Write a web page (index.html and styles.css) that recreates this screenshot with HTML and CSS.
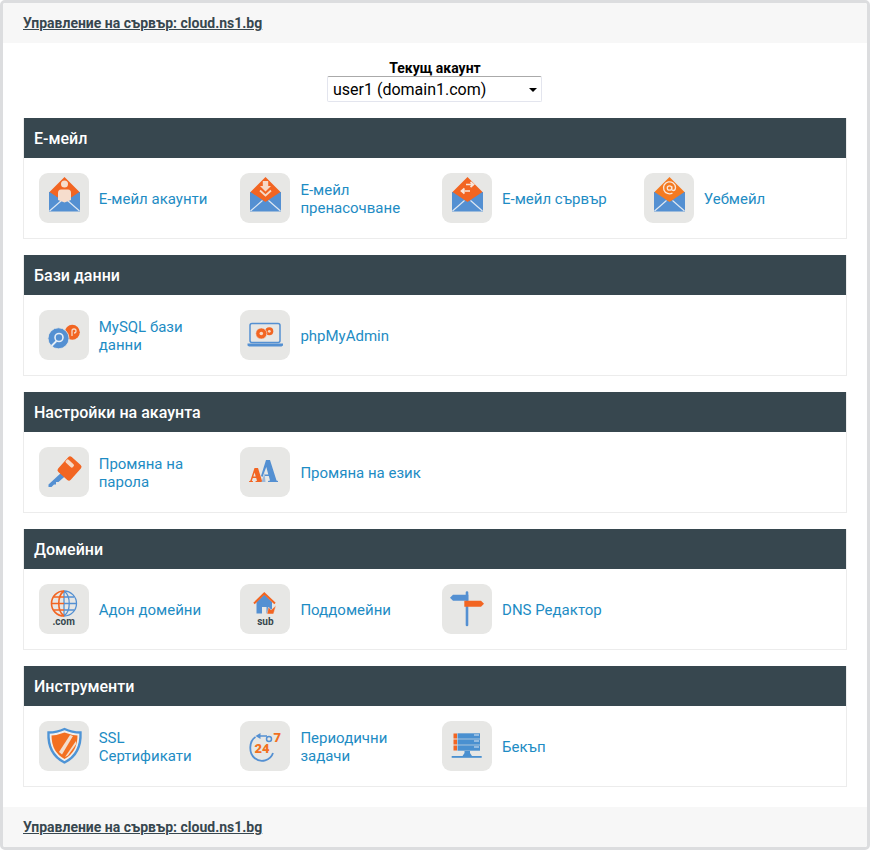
FILE: index.html
```html
<!DOCTYPE html>
<html lang="bg">
<head>
<meta charset="utf-8">
<title>Управление на сървър</title>
<link rel="stylesheet" href="styles.css">
</head>
<body>
<svg class="defs" width="0" height="0" aria-hidden="true">
  <defs>
    <symbol id="env" viewBox="0 0 50 50">
      <path d="M10 19 H41 V38.500 H10Z" fill="#5490d2"/>
    </symbol>
    <symbol id="flap" viewBox="0 0 50 50">
      <path d="M25.500 4 L40.500 19 L25.500 29 L10.500 19Z" fill="currentColor"/>
      <path d="M10.500 20 L25.500 30 L40.500 20" fill="none" stroke="#5490d2" stroke-width="1"/>
      <path d="M10.500 38 L22.500 27.500 M40.500 38 L28.500 27.500" stroke="#dbe6f2" stroke-width="1.200" fill="none"/>
    </symbol>
  </defs>
</svg>
<div class="page">
  <header class="bar"><a class="bar-link" href="#">Управление на сървър: cloud.ns1.bg</a></header>
  <main class="content">
    <div class="account">
      <label class="account-label" for="acc">Текущ акаунт</label>
      <span class="account-wrap"><select class="account-select" id="acc"><option>user1 (domain1.com)</option></select></span>
    </div>

    <section class="panel">
      <h2 class="panel-title">Е-мейл</h2>
      <div class="panel-grid">
        <a class="tile" href="#"><span class="ico flame"><svg viewBox="0 0 50 50">
          <use href="#env"/>
          <use href="#flap"/>
          <circle cx="25.500" cy="11" r="3.500" fill="#f6ddcd"/>
          <path d="M19 27 V20 Q19 16.500 22 16.500 H29 Q32 16.500 32 20 V27 L25.500 29.500Z" fill="#f6ddcd"/>
        </svg></span><span class="lbl">Е-мейл акаунти</span></a>
        <a class="tile" href="#"><span class="ico flame"><svg viewBox="0 0 50 50">
          <use href="#env"/>
          <use href="#flap"/>
          <path d="M22.800 8 H28.200 V13 H31 L25.500 18.500 L20 13 H22.800Z" fill="#f6d9c6"/>
          <path d="M20 17.500 L25.500 22.500 L31 17.500" fill="none" stroke="#f6d9c6" stroke-width="1.800"/>
        </svg></span><span class="lbl">Е-мейл пренасочване</span></a>
        <a class="tile" href="#"><span class="ico flame"><svg viewBox="0 0 50 50">
          <use href="#env"/>
          <use href="#flap"/>
          <path d="M24 11.500 H31 M28.500 9 L31.500 11.500 L28.500 14 M28 18 H20 M22.500 15.500 L19.500 18 L22.500 20.500" fill="none" stroke="#f8e6da" stroke-width="1.700"/>
        </svg></span><span class="lbl">Е-мейл сървър</span></a>
        <a class="tile" href="#"><span class="ico amber"><svg viewBox="0 0 50 50">
          <use href="#env"/>
          <use href="#flap"/>
          <circle cx="25.500" cy="15" r="2.200" fill="none" stroke="#f8e6da" stroke-width="1.300"/>
          <path d="M27.700 13 V16 Q27.700 17.500 29.200 17.500 Q31.500 17.500 31.500 14.500 A6 6 0 1 0 28.500 20" fill="none" stroke="#f8e6da" stroke-width="1.300"/>
        </svg></span><span class="lbl">Уебмейл</span></a>
      </div>
    </section>

    <section class="panel">
      <h2 class="panel-title">Бази данни</h2>
      <div class="panel-grid">
        <a class="tile" href="#"><span class="ico"><svg viewBox="0 0 50 50">
          <circle cx="33.300" cy="22.300" r="7.500" fill="#f26522"/>
          <path d="M33 26 V21 A2 2 0 1 1 35 23" fill="none" stroke="#f6d9c6" stroke-width="1.300"/>
          <circle cx="19.500" cy="28.300" r="10.500" fill="#5490d2" stroke="#e7e7e5" stroke-width=".8"/>
          <circle cx="20" cy="27.500" r="4" fill="none" stroke="#e6eef7" stroke-width="1.600"/>
          <path d="M17.500 31 L12.500 36" stroke="#e6eef7" stroke-width="1.800"/>
        </svg></span><span class="lbl">MySQL бази данни</span></a>
        <a class="tile" href="#"><span class="ico"><svg viewBox="0 0 50 50">
          <rect x="10" y="13.500" width="30" height="19" rx="2" fill="none" stroke="#5490d2" stroke-width="1.500"/>
          <path d="M7.500 33.500 H43 V35.500 L41.500 36.500 H9 L7.500 35.500Z" fill="#5490d2"/>
          <circle cx="29.300" cy="21.300" r="4" fill="#f26522"/>
          <circle cx="29.300" cy="21.300" r="1.400" fill="#f6d9c6"/>
          <circle cx="21.300" cy="23.500" r="5.500" fill="#f26522" stroke="#e7e7e5" stroke-width=".6"/>
          <circle cx="21.300" cy="23.500" r="1.800" fill="#f6d9c6"/>
        </svg></span><span class="lbl">phpMyAdmin</span></a>
      </div>
    </section>

    <section class="panel">
      <h2 class="panel-title">Настройки на акаунта</h2>
      <div class="panel-grid">
        <a class="tile" href="#"><span class="ico"><svg viewBox="0 0 50 50">
          <path d="M23 25 L9.500 37.500 V40 H12.500 L15 37.500 H17 V35 H19.500 L28 27.500Z" fill="#5490d2"/>
          <rect x="22" y="11.500" width="17" height="20" rx="2.500" transform="rotate(42 30.500 21.500)" fill="#f26522"/>
          <rect x="26" y="14.500" width="9.500" height="4" rx="1.500" transform="rotate(42 30.750 16.500)" fill="#f6d9c6"/>
        </svg></span><span class="lbl">Промяна на парола</span></a>
        <a class="tile" href="#"><span class="ico"><svg viewBox="0 0 50 50">
          <path d="M26 13 H30 L36.500 33.500 L38 34 V35 H28 V34 L30 33.500 L28.800 29 H24.500 V27.500 H28.300 L26.300 20 L22.500 30 L21 29Z" fill="#5490d2"/>
          <path d="M14.500 21 H18 L22 33.800 L23.500 34.200 V35 H15.500 V34.200 L17 33.800 L16.200 31 H12.800 L11.800 33.800 L13 34.200 V35 H9 V34.200 L10.300 33.800Z M13.300 29.500 H15.700 L14.600 25.500Z" fill="#f26522" fill-rule="evenodd"/>
          <path d="M21.500 35 L24.500 26 L25.500 35Z" fill="#9db9da"/>
        </svg></span><span class="lbl">Промяна на език</span></a>
      </div>
    </section>

    <section class="panel">
      <h2 class="panel-title">Домейни</h2>
      <div class="panel-grid">
        <a class="tile" href="#"><span class="ico"><svg viewBox="0 0 50 50">
          <g fill="none" stroke-width="1.300">
            <g stroke="#5490d2">
              <path d="M25 7 A12.500 12.500 0 0 1 25 32"/>
              <path d="M25 7 C32 12 32 27 25 32 M25 7 V32 M25 19.500 H37.500 M25 13 H35 M25 26 H35"/>
            </g>
            <g stroke="#f26522" stroke-width="1.600">
              <path d="M25 7 A12.500 12.500 0 0 0 25 32"/>
              <path d="M25 7 C18 12 18 27 25 32 M12.500 19.500 H25 M15 13 H25 M15 26 H25"/>
            </g>
          </g>
        </svg><span class="ico-text">.com</span></span><span class="lbl">Адон домейни</span></a>
        <a class="tile" href="#"><span class="ico"><svg viewBox="0 0 50 50">
          <path d="M16.500 18 V29.500 H22 V23 H26.500 V29.500 H32 V18 L24.300 10.500Z" fill="#5490d2"/>
          <path d="M14 19.500 L24.300 9.500 L35 19.500" fill="none" stroke="#f26522" stroke-width="2"/>
          <path d="M27 30 L28.500 23 L31 26 L36 21.500 L33.500 30Z" fill="#f26522" stroke="#e7e7e5" stroke-width=".5"/>
        </svg><span class="ico-text">sub</span></span><span class="lbl">Поддомейни</span></a>
        <a class="tile" href="#"><span class="ico"><svg viewBox="0 0 50 50">
          <rect x="23.700" y="7.300" width="2.600" height="35" rx="1.300" fill="#5490d2"/>
          <path d="M11 10.700 H26.300 V16.700 H11 L8 13.700Z" fill="#5490d2"/>
          <path d="M22.300 16.700 H39 L42 19.700 L39 22.700 H22.300Z" fill="#f26522"/>
        </svg></span><span class="lbl">DNS Редактор</span></a>
      </div>
    </section>

    <section class="panel">
      <h2 class="panel-title">Инструменти</h2>
      <div class="panel-grid">
        <a class="tile" href="#"><span class="ico"><svg viewBox="0 0 50 50">
          <path d="M25.500 8 Q33 11.500 41.500 11.500 Q42.500 33 25.500 41.500 Q8.500 33 9.500 11.500 Q18 11.500 25.500 8Z" fill="#f2efeb" stroke="#4e94d6" stroke-width="2.400"/>
          <path d="M25.500 11.500 Q32 14 38.500 14.500 Q38.500 31 25.500 38 Q12.500 31 12.500 14.500 Q19 14 25.500 11.500Z" fill="#f37021"/>
          <path d="M20 31 L31 14 L34 15 L23 33.500Z" fill="#f3ddcc"/>
          <path d="M26 36 L37 20 L37.300 23 L29 34.500Z" fill="#f3ddcc"/>
        </svg></span><span class="lbl">SSL Сертификати</span></a>
        <a class="tile" href="#"><span class="ico"><svg viewBox="0 0 50 50">
          <path d="M15.500 16 C9 20 8.500 32 14.500 37 C21 42.500 30.500 39.500 33 32" fill="none" stroke="#5490d2" stroke-width="1.800"/>
          <path d="M17 15 H27" stroke="#5490d2" stroke-width="1.500"/>
          <path d="M20.500 12 L15.500 15 L20.500 18Z" fill="#5490d2"/>
          <circle cx="29" cy="18" r="2.500" fill="none" stroke="#5490d2" stroke-width="1.500"/>
        </svg><span class="t24">24</span><span class="t7">7</span></span><span class="lbl">Периодични задачи</span></a>
        <a class="tile" href="#"><span class="ico"><svg viewBox="0 0 50 50">
          <rect x="11.500" y="12.500" width="3.500" height="5" fill="#f26522"/>
          <rect x="11.500" y="18.500" width="3.500" height="5" fill="#f26522"/>
          <rect x="11.500" y="24.500" width="3.500" height="5" fill="#f26522"/>
          <rect x="15.500" y="12.300" width="22.500" height="5.400" fill="#4a90d0"/>
          <rect x="15.500" y="18.300" width="22.500" height="5.400" fill="#4a90d0"/>
          <rect x="15.500" y="24.300" width="22.500" height="5.400" fill="#4a90d0"/>
          <path d="M32 14 H37 M32 20 H37 M32 26 H37" stroke="#dbe6f2" stroke-width="1.200"/>
          <path d="M22.500 30 H28 V32 L30 35 H20.500 L22.500 32Z" fill="#4a90d0"/>
          <rect x="9.700" y="35" width="30" height="1.800" fill="#4a90d0"/>
        </svg></span><span class="lbl">Бекъп</span></a>
      </div>
    </section>
  </main>
  <footer class="bar bar-foot"><a class="bar-link" href="#">Управление на сървър: cloud.ns1.bg</a></footer>
</div>
</body>
</html>
```
FILE: styles.css
```css
html, body { margin: 0; padding: 0; background: #fff; }
body { font-family: Roboto, "Liberation Sans", sans-serif; }
.defs { position: absolute; }
.page {
  box-sizing: border-box;
  width: 870px;
  height: 850px;
  border: 3px solid #dcdddf;
  border-radius: 5px;
  display: flex;
  flex-direction: column;
  overflow: hidden;
}
.bar {
  height: 40px;
  flex: none;
  background: #f7f7f7;
  padding-left: 20px;
  display: flex;
  align-items: center;
}
.bar-link {
  color: #37474f;
  font-size: 14px;
  font-weight: 700;
  text-decoration: underline;
}
.bar-foot { margin-top: auto; }
.content { padding: 0 20px; }
.account {
  display: flex;
  flex-direction: column;
  align-items: center;
  padding-top: 17px;
  margin-bottom: 16px;
}
.account-label {
  font-family: Roboto, sans-serif;
  font-size: 14px;
  font-weight: 700;
  line-height: 16px;
  color: #000;
}
.account-wrap {
  position: relative;
  display: block;
  margin-right: 1px;
  height: 26px;
}
.account-wrap::after {
  content: "";
  position: absolute;
  right: 5px;
  top: 11.500px;
  border-left: 4px solid transparent;
  border-right: 4px solid transparent;
  border-top: 4px solid #000;
}
.account-select {
  display: block;
  box-sizing: border-box;
  width: 215px;
  height: 26px;
  appearance: none;
  font-family: Roboto, sans-serif;
  font-size: 16px;
  color: #000;
  background: #fff;
  border: 1px solid #e3e5ee;
  border-top-color: #aaa;
  border-radius: 2px;
  padding: 0 0 0 5px;
}
.panel {
  border: 1px solid #ececec;
  border-top: 0;
  margin-bottom: 16px;
}
.panel:last-child { margin-bottom: 0; }
.panel-title {
  margin: 0;
  height: 40px;
  line-height: 42px;
  background: #37474f;
  color: #fff;
  font-size: 16px;
  font-weight: 500;
  padding-left: 10px;
}
.panel-grid {
  display: grid;
  grid-template-columns: repeat(4, 201.7px);
  padding: 15px 0 15px 14.7px;
}
.tile {
  display: flex;
  align-items: center;
  text-decoration: none;
  color: #1e8cc4;
  font-size: 15px;
  line-height: 18px;
}
.ico {
  flex: none;
  position: relative;
  width: 50px;
  height: 50px;
  border-radius: 9px;
  background: #e7e7e5;
  margin-right: 10px;
  overflow: hidden;
}
.flame { color: #f26522; }
.amber { color: #f47a20; }
.ico svg { display: block; width: 50px; height: 50px; }
.lbl { max-width: 120.5px; padding-top: 2px; }
.ico-text {
  position: absolute;
  left: 0;
  right: 0;
  bottom: 7px;
  text-align: center;
  font-size: 10px;
  line-height: 11px;
  font-weight: 700;
  color: #37474f;
}
.t24, .t7 {
  position: absolute;
  font-size: 13px;
  line-height: 14px;
  font-weight: 900;
  color: #f37021;
}
.t24 { left: 14px; top: 21px; }
.t7 { left: 33px; top: 10px; }
```
